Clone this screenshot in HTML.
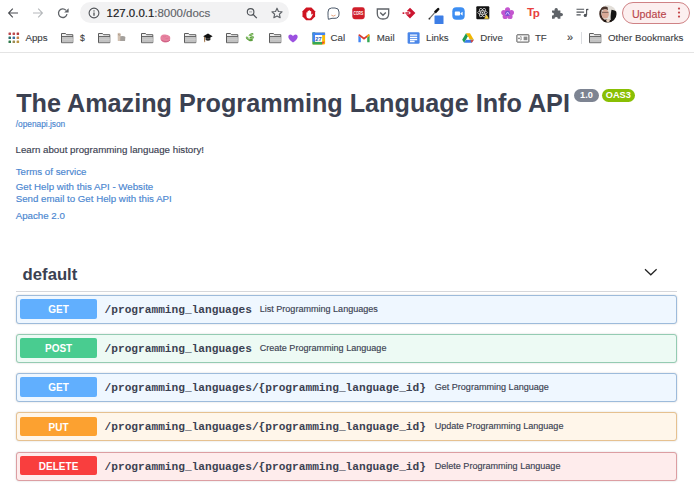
<!DOCTYPE html>
<html><head><meta charset="utf-8">
<style>
html,body{margin:0;padding:0;}
body{width:694px;height:485px;overflow:hidden;position:relative;background:#fff;font-family:"Liberation Sans",sans-serif;}
.a{position:absolute;white-space:nowrap;line-height:1;}
svg{position:absolute;overflow:visible;}
.omni{position:absolute;left:79.9px;top:2.1px;width:208.9px;height:21.4px;border-radius:10.7px;background:#f2f2f3;}
.bm{position:absolute;top:33px;font-size:9.7px;color:#3c4043;-webkit-text-stroke:.12px #3c4043;}
.sep{position:absolute;left:0;top:52px;width:694px;height:1px;background:#e4e4e4;}
.ttl{left:16.2px;top:90.6px;font-size:25.2px;font-weight:bold;color:#3b4151;}
.lnk{color:#4a86d0;-webkit-text-stroke:.15px #4a86d0;}
.ob{position:absolute;left:16px;width:659px;height:27px;border:1px solid;border-radius:3px;box-shadow:0 0 2px rgba(0,0,0,.19);}
.mth{position:absolute;left:3.1px;top:3.4px;width:77px;height:19.3px;border-radius:2px;color:#fff;font-weight:bold;font-size:10px;line-height:21.5px;text-align:center;}
.pth{position:absolute;left:87.6px;top:9.2px;font-family:"Liberation Mono",monospace;font-weight:bold;font-size:11.17px;line-height:1;color:#3b4151;white-space:nowrap;}
.sum{position:absolute;top:9.2px;font-size:9.05px;line-height:1;color:#3b4151;white-space:nowrap;-webkit-text-stroke:.15px #3b4151;}
</style></head><body>

<!-- ===== toolbar ===== -->
<svg width="12" height="12" style="left:7.2px;top:7px" viewBox="0 0 12 12"><path d="M11 6H1.6M5.8 1.6 1.6 6l4.2 4.4" fill="none" stroke="#4a4d52" stroke-width="1.1"/></svg>
<svg width="12" height="12" style="left:31.8px;top:7px" viewBox="0 0 12 12"><path d="M1 6h9.4M6.2 1.6 10.4 6l-4.2 4.4" fill="none" stroke="#b5b8bb" stroke-width="1.1"/></svg>
<svg width="12" height="12" style="left:57px;top:7px" viewBox="0 0 12 12"><path d="M10 7.2A4.3 4.3 0 1 1 8.9 3.2" fill="none" stroke="#5f6368" stroke-width="1.3"/><path d="M11.6 1.2V5.6H7.2z" fill="#5f6368"/></svg>

<div class="omni"></div>
<svg width="12" height="12" style="left:88.4px;top:7.2px" viewBox="0 0 12 12"><circle cx="6" cy="6" r="4.9" fill="none" stroke="#505358" stroke-width="1.1"/><path d="M6 5.4v3.4" stroke="#3c4043" stroke-width="1.2"/><circle cx="6" cy="3.9" r=".7" fill="#3c4043"/></svg>
<div class="a" style="left:106.6px;top:8.3px;font-size:11.45px;color:#202124;-webkit-text-stroke:.2px #202124">127.0.0.1<span style="color:#5f6368;-webkit-text-stroke:.15px #5f6368">:8000/docs</span></div>
<svg width="12" height="12" style="left:246px;top:7px" viewBox="0 0 12 12"><circle cx="4.6" cy="4.9" r="3.3" fill="none" stroke="#4f5358" stroke-width="1.15"/><path d="M3.1 4.9h3" stroke="#8a8d91" stroke-width=".8"/><path d="M7 7.3l3.8 3.8" stroke="#4f5358" stroke-width="1.25"/></svg>
<svg width="12" height="12" style="left:271px;top:7px" viewBox="0 0 12 12"><path d="M6 1.2l1.45 3.3 3.6.3-2.7 2.4.8 3.5L6 8.9l-3.15 1.8.8-3.5L.95 4.8l3.6-.3z" fill="none" stroke="#5f6368" stroke-width="1.15" stroke-linejoin="round"/></svg>

<!-- extension icons -->
<svg width="14" height="14" style="left:301.6px;top:6.5px" viewBox="0 0 14 14"><path d="M4.2 .6h5.2l3.7 3.7v5.2l-3.7 3.7H4.2L.5 9.5V4.3z" fill="#cf1522"/><path d="M4.4 8.6V5.6q.7-.6 1.2 0V4.1q.7-.6 1.2 0v-.5q.7-.6 1.2 0v.7q.7-.6 1.2 0v3.5l.9-1q.8-.2.7.6L9.1 10.4Q8.1 11.6 6.8 11.6 4.4 11.5 4.4 8.6z" fill="#fff"/></svg>
<svg width="13" height="13" style="left:327px;top:6.6px" viewBox="0 0 13 13"><path d="M4.6 1h3.4q4 0 4 4v2q0 4.3-4 4.3H5L1.4 12.3 1.1 10.2Q1 9 1 7V5q0-4 3.6-4z" fill="#fff" stroke="#4d5a6b" stroke-width="1"/><path d="M4.3 8.1q2.1 2 4.2 0" fill="none" stroke="#e39a72" stroke-width=".9"/></svg>
<svg width="14" height="14" style="left:351.8px;top:6.8px" viewBox="0 0 14 14"><rect x=".3" y=".2" width="12.4" height="12" rx="2.4" fill="#d01e2a"/><text x="1.6" y="8" font-family="Liberation Sans" font-weight="bold" font-size="5.2" fill="#fff" textLength="9.6" lengthAdjust="spacingAndGlyphs">CORS</text></svg>
<svg width="14" height="12" style="left:376.2px;top:7.5px" viewBox="0 0 14 12"><path d="M1.3 1h11.4v4.4q0 5.6-5.7 5.6T1.3 5.4z" fill="none" stroke="#5f6368" stroke-width="1.3"/><path d="M4.2 4.4 7 7.2 9.8 4.4" fill="none" stroke="#5f6368" stroke-width="1.4"/></svg>
<svg width="14" height="13" style="left:401.5px;top:7px" viewBox="0 0 14 13"><path d="M8 .7l5.4 5.4L8 11.5 3.8 7.3h3.6L8.9 6 7.3 4.5 5.8 4.6 4.8 3.9z" fill="#cc1530"/><path d="M3.4 5.2h3.4l.8.8-.8.8H3.4z" fill="#cc1530"/><rect x=".6" y="5.3" width="1.7" height="1.7" fill="#cc1530"/></svg>
<svg width="17" height="18" style="left:428.4px;top:6.5px" viewBox="0 0 17 18"><path d="M1.4 11.6 7.2 5.2" stroke="#6b6b6b" stroke-width="1.1"/><circle cx="1.4" cy="11.7" r=".9" fill="#333"/><path d="M6 4.6 9.3 1.3q1-.9 1.8 0t0 1.8L7.8 6.4z" fill="#111"/><rect x="6.5" y="8.4" width="9" height="8.6" rx=".6" fill="#3d7ee6"/></svg>
<svg width="13" height="13" style="left:451.7px;top:6.6px" viewBox="0 0 13 13"><rect x=".3" y=".3" width="12.4" height="12.4" rx="4" fill="#3d8ef2"/><rect x="2.8" y="4.6" width="5.2" height="4" rx=".8" fill="#fff"/><path d="M8.5 6.2l2.1-1.5v3.8L8.5 7z" fill="#fff"/></svg>
<svg width="14" height="14" style="left:476.2px;top:6.4px" viewBox="0 0 14 14"><rect x=".3" y=".3" width="13" height="13" rx="1" fill="#121212"/><g fill="none" stroke="#dcdcdc" stroke-width=".7"><ellipse cx="6.5" cy="6.6" rx="4.8" ry="1.9"/><ellipse cx="6.5" cy="6.6" rx="4.8" ry="1.9" transform="rotate(60 6.5 6.6)"/><ellipse cx="6.5" cy="6.6" rx="4.8" ry="1.9" transform="rotate(120 6.5 6.6)"/></g><circle cx="6.5" cy="6.6" r=".9" fill="#ddd"/><path d="M10.6 8.6l2.4 4.2H8.2z" fill="#f4d03f"/></svg>
<svg width="14" height="13" style="left:501.4px;top:7.2px" viewBox="0 0 14 13"><g fill="#c456cf"><circle cx="6.6" cy="2.8" r="2.6"/><circle cx="2.8" cy="5.6" r="2.6"/><circle cx="10.4" cy="5.6" r="2.6"/><circle cx="4.2" cy="9.4" r="2.6"/><circle cx="9" cy="9.4" r="2.6"/></g><circle cx="6.6" cy="6.4" r="2.6" fill="#7a4fd6"/><path d="M4.8 7.8 6.6 5l1.8 2.8" stroke="#e8d8ff" stroke-width=".8" fill="none"/></svg>
<div class="a" style="left:527px;top:6px;font-size:11.6px;font-weight:bold;color:#e8413e;letter-spacing:-1.4px">T<span style="position:relative;top:1px">p</span></div>
<svg width="13" height="12" style="left:551.3px;top:6.8px" viewBox="0 0 13 12"><path d="M1 3.5h2.6q-.4-2.6 1.6-2.6t1.6 2.6h2.6v2.5q2.6-.4 2.6 1.6t-2.6 1.6v2.6H6.8q.4-1.8-1.6-1.8t-1.6 1.8H1V8.6q2-.1 2-1.6T1 5.5z" fill="#5f6368"/></svg>
<svg width="13" height="11" style="left:576px;top:7.6px" viewBox="0 0 13 11"><path d="M.5 1.3h7.6M.5 4.1h7.6M.5 6.9h4.2" stroke="#4f5358" stroke-width="1.1"/><path d="M10.6 1v6" stroke="#4f5358" stroke-width="1.1"/><path d="M10.6 .8h1.8v1.4h-1.8z" fill="#4f5358"/><circle cx="9.3" cy="7.4" r="1.6" fill="#4f5358"/></svg>

<!-- avatar -->
<svg width="18" height="18" style="left:598.9px;top:4.6px" viewBox="0 0 18 18"><defs><clipPath id="av"><circle cx="8.9" cy="8.9" r="8.6"/></clipPath></defs><g clip-path="url(#av)"><rect width="18" height="18" fill="#e2ded8"/><path d="M0 0h7Q2.5 2 2.2 8 2.5 13 6 15L8 18H0z" fill="#3a2620"/><path d="M2 3Q5 .8 8.5 2L9 5Q6 3.5 3.5 5z" fill="#4a342c"/><ellipse cx="6.3" cy="9" rx="3.6" ry="4.6" fill="#d7a896"/><path d="M3 7.4h6.4" stroke="#5a4a44" stroke-width=".7"/><path d="M12.5 4.8Q16 5 18 7v9h-6q-1-4 .5-11.2z" fill="#141414"/><path d="M3 18q1.5-4 5-3.5l4 .5 3 3z" fill="#1e1512"/><ellipse cx="9" cy="15.6" rx="1.8" ry="1.6" fill="#e9d2c0"/></g></svg>

<!-- Update pill -->
<div style="position:absolute;left:621.5px;top:2px;width:66.8px;height:19.8px;border:1px solid #cf8285;border-radius:11px;background:#fcefef;"></div>
<div class="a" style="left:631.9px;top:8.8px;font-size:10.7px;color:#b9464d;-webkit-text-stroke:.15px #b9464d">Update</div>
<svg width="4" height="12" style="left:677.1px;top:7.4px" viewBox="0 0 4 12"><g fill="#c5484a"><circle cx="2" cy="1.6" r="1.1"/><circle cx="2" cy="5.6" r="1.1"/><circle cx="2" cy="9.6" r="1.1"/></g></svg>

<!-- ===== bookmarks bar ===== -->
<svg width="12" height="12" style="left:7.5px;top:32.2px" viewBox="0 0 12 12"><rect x="0.50" y="0.50" width="2.5" height="2.5" rx=".4" fill="#b9454b"/><rect x="4.55" y="0.50" width="2.5" height="2.5" rx=".4" fill="#bd4a4c"/><rect x="8.60" y="0.50" width="2.5" height="2.5" rx=".4" fill="#b43c40"/><rect x="0.50" y="4.55" width="2.5" height="2.5" rx=".4" fill="#2b6f69"/><rect x="4.55" y="4.55" width="2.5" height="2.5" rx=".4" fill="#3f6e9e"/><rect x="8.60" y="4.55" width="2.5" height="2.5" rx=".4" fill="#c5834a"/><rect x="0.50" y="8.60" width="2.5" height="2.5" rx=".4" fill="#2f7a4b"/><rect x="4.55" y="8.60" width="2.5" height="2.5" rx=".4" fill="#9c8c52"/><rect x="8.60" y="8.60" width="2.5" height="2.5" rx=".4" fill="#bb9440"/></svg>
<div class="bm a" style="left:25.5px">Apps</div>

<svg width="0" height="0" style="left:0;top:0"><defs><g id="fold"><path d="M.5 .5h4l1 1.2h6.3v8H.5z" fill="#efefef" stroke="#5c5c5c" stroke-width="1"/><path d="M.5 3.6h11.3" stroke="#5c5c5c" stroke-width="1"/><rect x="1" y="4.1" width="10.8" height="5.1" fill="#c2c2c2"/><path d="M1 6.3h10.8" stroke="#d4d4d4" stroke-width=".6"/></g></defs></svg>
<svg width="13" height="11" style="left:60.6px;top:32.6px" viewBox="0 0 13 11"><use href="#fold"/></svg>
<div class="bm a" style="left:80.1px;top:34px;font-size:8.6px;color:#3a3a3a">$</div>
<svg width="13" height="11" style="left:97.8px;top:32.6px" viewBox="0 0 13 11"><use href="#fold"/></svg>
<svg width="10" height="10" style="left:117.4px;top:31.6px" viewBox="0 0 10 10"><path d="M.6 1.2q1.5-.8 3 .2l.4 7.6H.8z" fill="#c9b6a4" opacity=".85"/><path d="M3.4 4.2q3.5-.8 5 .8l-.4 4H3.4z" fill="#8d8883" opacity=".8"/><path d="M1 2.5q1.2 1 2.4.2" stroke="#a08a78" stroke-width=".8" fill="none"/></svg>
<svg width="13" height="11" style="left:140.6px;top:32.6px" viewBox="0 0 13 11"><use href="#fold"/></svg>
<svg width="11" height="9" style="left:159.6px;top:33.8px" viewBox="0 0 11 9"><path d="M.4 4Q.6.8 4 .6q3.5-.4 5.8 1.6 1.2 2 0 4-1.6 2.4-4.6 2.2Q2.8 8.6 1.4 6.8.3 5.6.4 4z" fill="#e6829f"/><path d="M1.4 6.2q2.5 1.6 5.5 1.4 2-.2 3.2-1.6" stroke="#c95b80" stroke-width=".9" fill="none"/><path d="M3 2.5q1.5.8 3-.3M5.5 4.5q1.8.5 3.2-.5" stroke="#d86a8c" stroke-width=".5" fill="none"/></svg>
<svg width="13" height="11" style="left:183.8px;top:32.6px" viewBox="0 0 13 11"><use href="#fold"/></svg>
<svg width="10" height="10" style="left:202.6px;top:33.2px" viewBox="0 0 10 10"><path d="M.2 3.2 5 .4l4.6 2.8L5 6z" fill="#111"/><path d="M2.6 4.6v2.3q2.4 1.6 4.8 0V4.6L5 6z" fill="#262626"/><path d="M1.6 3.8v4.6" stroke="#8a5a2a" stroke-width=".9"/><path d="M1 8.2h1.3L1.9 9.6z" fill="#a06a30"/></svg>
<svg width="13" height="11" style="left:226px;top:32.6px" viewBox="0 0 13 11"><use href="#fold"/></svg>
<svg width="10" height="10" style="left:245.4px;top:32.4px" viewBox="0 0 10 10"><g fill="#5d9e3f"><ellipse cx="6.2" cy="2.6" rx="2.4" ry="1.3" transform="rotate(-20 6.2 2.6)"/><ellipse cx="6.8" cy="5.6" rx="2.4" ry="1.3" transform="rotate(-10 6.8 5.6)"/><ellipse cx="5.6" cy="8" rx="2.4" ry="1.3"/><ellipse cx="2.4" cy="6.2" rx="2" ry="1.2" transform="rotate(50 2.4 6.2)"/></g><path d="M1.5 5.5q2.5 3 7 0M3 4q2-1.5 5-1.5" stroke="#b5e39a" stroke-width=".7" fill="none"/></svg>
<svg width="13" height="11" style="left:269.2px;top:32.6px" viewBox="0 0 13 11"><use href="#fold"/></svg>
<svg width="10" height="9" style="left:288px;top:33.6px" viewBox="0 0 10 9"><path d="M5 8.6Q.3 5.3.3 2.7 .3.4 2.6.4 4.1.4 5 1.9 5.9.4 7.4.4 9.7.4 9.7 2.7 9.7 5.3 5 8.6z" fill="#9b51e0"/></svg>

<svg width="14" height="13" style="left:311.8px;top:31.6px" viewBox="0 0 14 13"><rect x=".5" y=".5" width="12.6" height="12" rx="1.2" fill="#fbbc04"/><rect x=".5" y=".5" width="9.6" height="9.2" fill="#fff"/><path d="M.5 .5h12.6v2.6H.5z" fill="#4285f4"/><path d="M.5 .5v12h9.6V9.7H3.1V.5z" fill="#34a853"/><path d="M.5 .5h2.6v9.2H.5z" fill="#4285f4"/><path d="M10.1 12.5l3-2.8h-3z" fill="#ea4335"/><rect x="3.1" y="3.1" width="7" height="6.6" fill="#fff"/><text x="6.6" y="8.9" font-family="Liberation Sans" font-size="5.8" font-weight="bold" fill="#2a5bb8" text-anchor="middle">27</text></svg>
<div class="bm a" style="left:330.6px">Cal</div>
<svg width="12" height="9" style="left:358.4px;top:33.8px" viewBox="0 0 12 9"><path d="M.4 1.4v6.8h2.4V3.4z" fill="#4285f4"/><path d="M9.2 3.4v4.8h2.4V1.4z" fill="#34a853"/><path d="M.4 1.4Q.5.2 1.6.3L6 3.6 10.4.3q1.1-.1 1.2 1.1L6 5.8z" fill="#d93a2e"/><path d="M9.2 1.4v2L11.6 1.5Q11.5.2 10.4.3z" fill="#f0b400"/></svg>
<div class="bm a" style="left:376.8px">Mail</div>
<svg width="13" height="12" style="left:406.6px;top:32px" viewBox="0 0 13 12"><rect x=".6" y=".3" width="12" height="11.4" rx="1.3" fill="#4a86e8"/><path d="M3 3.1h7.2M3 5.3h7.2M3 7.5h7.2M3 9.5h4.6" stroke="#fff" stroke-width="1.35"/></svg>
<div class="bm a" style="left:426px">Links</div>
<svg width="12" height="10" style="left:462.2px;top:33.2px" viewBox="0 0 12 10"><path d="M4 .3 .2 6.7l1.9 3L6 3.3z" fill="#1e9c55"/><path d="M4 .3h4l3.8 6.4H7.9z" fill="#f2b600"/><path d="M2.1 9.7h7.7l2-3H4z" fill="#3b7de8"/><path d="M11.8 6.7l-2 3-1.4-2.2z" fill="#e2452f"/><path d="M6 3.6 4.6 6.6h2.9z" fill="#fff"/></svg>
<div class="bm a" style="left:480.2px">Drive</div>
<svg width="14" height="9" style="left:515.6px;top:33.6px" viewBox="0 0 14 9"><rect x=".9" y=".8" width="12" height="7.3" rx=".4" fill="#fff" stroke="#555" stroke-width="1"/><rect x="7.6" y="2.6" width="3.8" height="3.6" fill="#8a8a8a"/><circle cx="3" cy="4.3" r=".9" fill="#777"/><path d="M4.3 2.6h.8v3.4h-.8" stroke="#777" stroke-width=".8" fill="none"/></svg>
<div class="bm a" style="left:534.9px">TF</div>
<div class="bm a" style="left:567px;top:32px;font-size:11px;color:#3c4043">»</div>
<div style="position:absolute;left:581px;top:32.4px;width:1px;height:12px;background:#dadce0"></div>
<svg width="13" height="11" style="left:589.4px;top:32.6px" viewBox="0 0 13 11"><use href="#fold"/></svg>
<div class="bm a" style="left:608px">Other Bookmarks</div>

<div class="sep"></div>

<!-- ===== swagger content ===== -->
<div class="a ttl">The Amazing Programming Language Info API</div>
<div style="position:absolute;left:573.9px;top:88.6px;width:25.1px;height:13px;border-radius:6.5px;background:#7d8492;color:#fff;font-weight:bold;font-size:9.2px;line-height:13.4px;text-align:center">1.0</div>
<div style="position:absolute;left:601.6px;top:88.6px;width:33.4px;height:13px;border-radius:6.5px;background:#89bf04;color:#fff;font-weight:bold;font-size:9.2px;line-height:13.4px;text-align:center">OAS3</div>

<div class="a lnk" style="left:15.7px;top:119.8px;font-size:8.33px">/openapi.json</div>
<div class="a" style="left:15.5px;top:144.5px;font-size:9.72px;color:#3b4151;-webkit-text-stroke:.15px #3b4151">Learn about programming language history!</div>
<div class="a lnk" style="left:15.7px;top:166.6px;font-size:9.72px">Terms of service</div>
<div class="a lnk" style="left:15.7px;top:182.3px;font-size:9.72px">Get Help with this API - Website</div>
<div class="a lnk" style="left:15.7px;top:194.4px;font-size:9.72px">Send email to Get Help with this API</div>
<div class="a lnk" style="left:15.7px;top:211.2px;font-size:9.72px">Apache 2.0</div>

<div class="a" style="left:22.6px;top:266.8px;font-size:16.7px;font-weight:bold;color:#3b4151">default</div>
<svg width="14" height="9" style="left:644.2px;top:267.8px" viewBox="0 0 14 9"><path d="M1 1.2l5.8 5.6 5.8-5.6" fill="none" stroke="#222" stroke-width="1.2"/></svg>
<div style="position:absolute;left:16px;top:290.5px;width:660.5px;height:1px;background:#d6d7db"></div>

<div class="ob" style="top:295px;border-color:#9dbbdb;background:#eff7ff">
  <div class="mth" style="background:#61affe">GET</div>
  <div class="pth">/programming_languages</div>
  <div class="sum" style="left:242.7px">List Programming Languages</div>
</div>
<div class="ob" style="top:334px;border-color:#94cbb2;background:#edfaf4">
  <div class="mth" style="background:#49cc90">POST</div>
  <div class="pth">/programming_languages</div>
  <div class="sum" style="left:242.7px">Create Programming Language</div>
</div>
<div class="ob" style="top:373px;border-color:#9dbbdb;background:#eff7ff">
  <div class="mth" style="background:#61affe">GET</div>
  <div class="pth">/programming_languages/{programming_language_id}</div>
  <div class="sum" style="left:417.7px">Get Programming Language</div>
</div>
<div class="ob" style="top:412.2px;border-color:#e6c190;background:#fff6ea">
  <div class="mth" style="background:#fca130">PUT</div>
  <div class="pth">/programming_languages/{programming_language_id}</div>
  <div class="sum" style="left:417.7px">Update Programming Language</div>
</div>
<div class="ob" style="top:451.6px;border-color:#dc9ea2;background:#feecec">
  <div class="mth" style="background:#f93e3e">DELETE</div>
  <div class="pth">/programming_languages/{programming_language_id}</div>
  <div class="sum" style="left:417.7px">Delete Programming Language</div>
</div>

</body></html>
